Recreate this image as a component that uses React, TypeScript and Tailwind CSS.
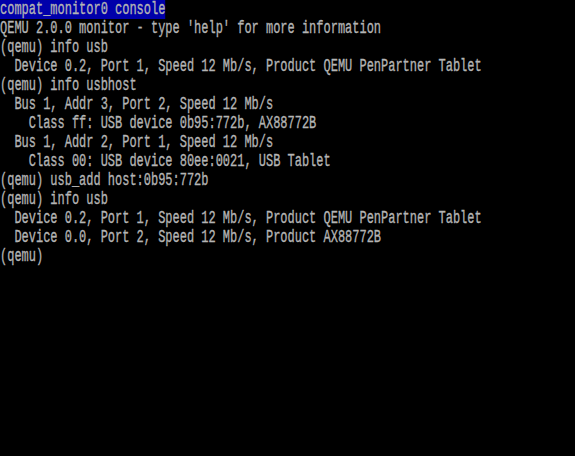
const lines = [
  "QEMU 2.0.0 monitor - type 'help' for more information",
  "(qemu) info usb",
  "  Device 0.2, Port 1, Speed 12 Mb/s, Product QEMU PenPartner Tablet",
  "(qemu) info usbhost",
  "  Bus 1, Addr 3, Port 2, Speed 12 Mb/s",
  "    Class ff: USB device 0b95:772b, AX88772B",
  "  Bus 1, Addr 2, Port 1, Speed 12 Mb/s",
  "    Class 00: USB device 80ee:0021, USB Tablet",
  "(qemu) usb_add host:0b95:772b",
  "(qemu) info usb",
  "  Device 0.2, Port 1, Speed 12 Mb/s, Product QEMU PenPartner Tablet",
  "  Device 0.0, Port 2, Speed 12 Mb/s, Product AX88772B",
  "(qemu)",
];

export default function App() {
  return (
    <div className="h-screen w-full overflow-hidden bg-black">
      {/* 80x24 text console, glyphs squeezed horizontally like the VGA font */}
      <div className="w-[912px] origin-top-left scale-x-[0.6305] font-['Liberation_Mono',monospace] text-[19px] leading-[19px] text-[#b4b4b4] [-webkit-text-stroke:0.35px_#b4b4b4]">
        <div className="h-[19px] whitespace-pre">
          <span className="inline-block h-[19px] bg-[#0000aa]">compat_monitor0 console</span>
        </div>
        {lines.map((line, i) => (
          <div key={i} className="h-[19px] whitespace-pre">
            {line}
          </div>
        ))}
      </div>
    </div>
  );
}
